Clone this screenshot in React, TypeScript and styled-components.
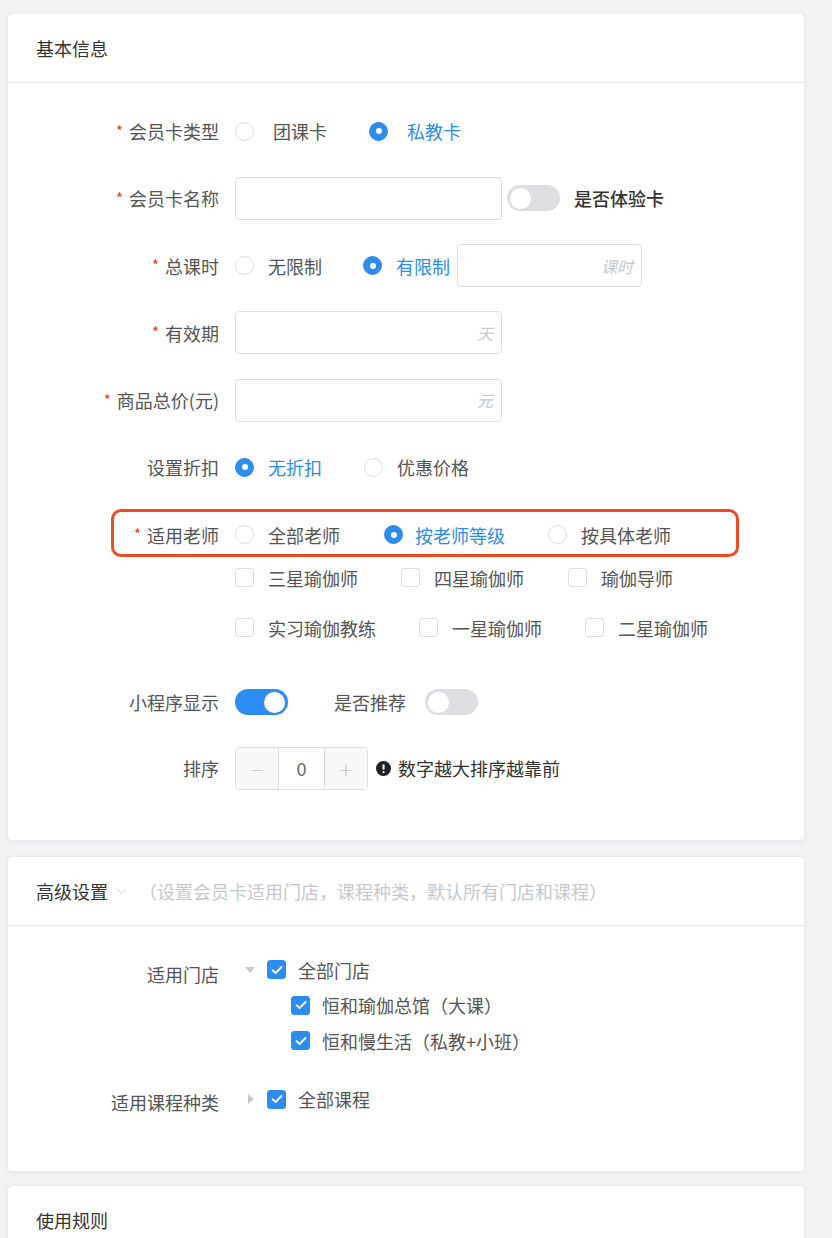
import React from "react";
import styled, { createGlobalStyle, css } from "styled-components";
import { ChevronDown } from "lucide-react";

const BLUE = "#2d8cf0";
const BORDER = "#dcdee2";

const GlobalStyle = createGlobalStyle`
  html, body {
    margin: 0;
    padding: 0;
    background: #f3f3f5;
  }
  body {
    font-family: "Noto Sans CJK SC", "Noto Sans", sans-serif;
    color: #515a6e;
  }
  * { box-sizing: border-box; }
`;

const Page = styled.div`
  padding: 13px 27px 0 7px;
  display: flex;
  flex-direction: column;
  gap: 13px;
`;

const Card = styled.section<{ $mb?: number }>`
  background: #fff;
  border: 1px solid #e8eaec;
  border-radius: 5px;
  box-shadow: 0 1px 6px rgba(0, 0, 0, 0.05);
  margin-bottom: ${(p) => p.$mb ?? 0}px;
`;

const CardHeader = styled.div`
  height: 69px;
  padding-left: 28px;
  display: flex;
  align-items: center;
  gap: 6px;
  border-bottom: 1px solid #e8eaec;
  font-size: 18px;
  color: #333;
`;

const HeaderHint = styled.span`
  color: #c5c8ce;
  margin-left: 4px;
`;

const CardBody = styled.div<{ $top: number; $bottom: number }>`
  padding-top: ${(p) => p.$top}px;
  padding-bottom: ${(p) => p.$bottom}px;
`;

const FormItem = styled.div<{ $mb?: number }>`
  position: relative;
  display: grid;
  grid-template-columns: 211px 1fr;
  column-gap: 16px;
  margin-bottom: ${(p) => (p.$mb ?? 25.3)}px;
  &:last-child { margin-bottom: 0; }
`;

const Label = styled.div<{ $tall?: number }>`
  height: ${(p) => p.$tall ?? 42}px;
  display: flex;
  align-items: center;
  justify-content: flex-end;
  font-size: 18px;
  color: #555;
  white-space: nowrap;
`;

const Star = styled.span`
  color: #ed4014;
  font-size: 15px;
  margin-right: 6px;
  position: relative;
  top: -1px;
`;

const Line = styled.div<{ $h?: number; $mt?: number }>`
  height: ${(p) => p.$h ?? 42}px;
  margin-top: ${(p) => p.$mt ?? 0}px;
  display: flex;
  align-items: center;
  font-size: 18px;
  color: #555;
  white-space: nowrap;
`;

const Option = styled.label<{ $gap?: number; $mr?: number }>`
  display: inline-flex;
  align-items: center;
  gap: ${(p) => p.$gap ?? 14}px;
  margin-right: ${(p) => p.$mr ?? 42}px;
  &:last-child { margin-right: 0; }
`;

const OptionText = styled.span<{ $on?: boolean }>`
  color: ${(p) => (p.$on ? BLUE : "#555")};
`;

const RadioDot = styled.span<{ $on?: boolean }>`
  width: 19px;
  height: 19px;
  border-radius: 50%;
  border: 1px solid ${BORDER};
  background: #fff;
  display: inline-flex;
  align-items: center;
  justify-content: center;
  ${(p) =>
    p.$on &&
    css`
      border-color: ${BLUE};
      background: ${BLUE};
      &::after {
        content: "";
        width: 6px;
        height: 6px;
        border-radius: 50%;
        background: #fff;
      }
    `}
`;

const Box = styled.span<{ $on?: boolean }>`
  width: 19px;
  height: 19px;
  border-radius: 3px;
  border: 1px solid ${BORDER};
  background: ${(p) => (p.$on ? BLUE : "#fff")};
  border-color: ${(p) => (p.$on ? BLUE : BORDER)};
  display: inline-flex;
  align-items: center;
  justify-content: center;
`;

const Input = styled.div<{ $w: number }>`
  width: ${(p) => p.$w}px;
  height: 43px;
  border: 1px solid ${BORDER};
  border-radius: 4px;
  background: #fff;
  display: flex;
  align-items: center;
  justify-content: flex-end;
  padding-right: 8px;
`;

const Suffix = styled.span`
  font-size: 16px;
  font-style: italic;
  color: #c5c8ce;
`;

const Switch = styled.span<{ $on?: boolean }>`
  width: 53px;
  height: 26px;
  border-radius: 13px;
  background: ${(p) => (p.$on ? BLUE : "#dcdee2")};
  display: inline-flex;
  align-items: center;
  padding: 0 3px;
  justify-content: ${(p) => (p.$on ? "flex-end" : "flex-start")};
  &::after {
    content: "";
    width: 21px;
    height: 21px;
    border-radius: 50%;
    background: #fff;
  }
`;

const InlineText = styled.span<{ $ml?: number; $mr?: number; $strong?: boolean }>`
  color: ${(p) => (p.$strong ? "#333" : "#555")};
  font-weight: ${(p) => (p.$strong ? 500 : 400)};
  margin-left: ${(p) => p.$ml ?? 0}px;
  margin-right: ${(p) => p.$mr ?? 0}px;
`;

const Highlight = styled.div`
  position: absolute;
  left: 103px;
  top: -5px;
  width: 628px;
  height: 48px;
  border: 3px solid #ee4a26;
  border-radius: 10px;
  pointer-events: none;
`;

const CheckGroup = styled.div`
  padding-bottom: 6px;
`;

const Stepper = styled.div`
  width: 133px;
  height: 43px;
  border: 1px solid ${BORDER};
  border-radius: 4px;
  display: grid;
  grid-template-columns: 43px 1fr 43px;
  overflow: hidden;
`;

const StepBtn = styled.span<{ $side: "l" | "r" }>`
  background: #f8f8f9;
  color: #c5c8ce;
  display: flex;
  align-items: center;
  justify-content: center;
  font-size: 24px;
  font-weight: 300;
  ${(p) =>
    p.$side === "l"
      ? css`border-right: 1px solid ${BORDER};`
      : css`border-left: 1px solid ${BORDER};`}
`;

const StepValue = styled.span`
  display: flex;
  align-items: center;
  justify-content: center;
  color: #666;
  font-size: 18px;
`;

const Tip = styled.span`
  display: inline-flex;
  align-items: center;
  gap: 7px;
  margin-left: 8px;
  color: #333;
`;

const TreeLine = styled.div<{ $indent?: number }>`
  height: 35.5px;
  display: flex;
  align-items: center;
  padding-left: ${(p) => p.$indent ?? 0}px;
  font-size: 18px;
  color: #555;
  white-space: nowrap;
`;

const Switcher = styled.span`
  width: 26px;
  margin-right: 6px;
  display: inline-flex;
  justify-content: flex-end;
  padding-right: 4px;
`;

const Caret = styled.span<{ $open?: boolean }>`
  width: 0;
  height: 0;
  ${(p) =>
    p.$open
      ? css`
          border-left: 5px solid transparent;
          border-right: 5px solid transparent;
          border-top: 6px solid #c5c8ce;
          margin-right: 2px;
        `
      : css`
          border-top: 5px solid transparent;
          border-bottom: 5px solid transparent;
          border-left: 6px solid #c5c8ce;
          margin-right: 3px;
        `}
`;

const TreeText = styled.span`
  margin-left: 12px;
`;

const Check = () => (
  <svg width="12" height="10" viewBox="0 0 12 10">
    <path d="M1.5 5.2 L4.6 8 L10.5 2" fill="none" stroke="#fff" strokeWidth="1.8" strokeLinecap="round" strokeLinejoin="round" />
  </svg>
);

const Radio = ({ on, text, gap, mr }: { on?: boolean; text: string; gap?: number; mr?: number }) => (
  <Option $gap={gap} $mr={mr}>
    <RadioDot $on={on} />
    <OptionText $on={on}>{text}</OptionText>
  </Option>
);

const CheckItem = ({ on, text, mr }: { on?: boolean; text: string; mr?: number }) => (
  <Option $mr={mr}>
    <Box $on={on}>{on && <Check />}</Box>
    <OptionText>{text}</OptionText>
  </Option>
);

const TreeNode = ({ text, indent, caret }: { text: string; indent?: number; caret?: "open" | "closed" }) => (
  <TreeLine $indent={indent}>
    {caret && (
      <Switcher>
        <Caret $open={caret === "open"} />
      </Switcher>
    )}
    <Box $on>
      <Check />
    </Box>
    <TreeText>{text}</TreeText>
  </TreeLine>
);

const InfoIcon = () => (
  <svg width="15" height="15" viewBox="0 0 16 16">
    <circle cx="8" cy="8" r="8" fill="#222" />
    <rect x="6.9" y="3.4" width="2.2" height="6" rx="1" fill="#fff" />
    <circle cx="8" cy="11.9" r="1.2" fill="#fff" />
  </svg>
);

export default function App() {
  return (
    <>
      <GlobalStyle />
      <Page>
        <Card $mb={2}>
          <CardHeader>基本信息</CardHeader>
          <CardBody $top={27} $bottom={51}>
            <FormItem>
              <Label><Star>*</Star>会员卡类型</Label>
              <Line>
                <Radio text="团课卡" gap={19} mr={42} />
                <Radio on text="私教卡" gap={19} />
              </Line>
            </FormItem>

            <FormItem>
              <Label><Star>*</Star>会员卡名称</Label>
              <Line>
                <Input $w={267} />
                <Switch style={{ marginLeft: 5 }} />
                <InlineText $strong $ml={14}>是否体验卡</InlineText>
              </Line>
            </FormItem>

            <FormItem>
              <Label><Star>*</Star>总课时</Label>
              <Line>
                <Radio text="无限制" mr={41} />
                <Radio on text="有限制" gap={14} mr={7} />
                <Input $w={185}><Suffix>课时</Suffix></Input>
              </Line>
            </FormItem>

            <FormItem>
              <Label><Star>*</Star>有效期</Label>
              <Line>
                <Input $w={267}><Suffix>天</Suffix></Input>
              </Line>
            </FormItem>

            <FormItem>
              <Label><Star>*</Star>商品总价(元)</Label>
              <Line>
                <Input $w={267}><Suffix>元</Suffix></Input>
              </Line>
            </FormItem>

            <FormItem>
              <Label>设置折扣</Label>
              <Line>
                <Radio on text="无折扣" mr={42} />
                <Radio text="优惠价格" />
              </Line>
            </FormItem>

            <FormItem>
              <Highlight />
              <Label><Star>*</Star>适用老师</Label>
              <div>
                <Line>
                  <Radio text="全部老师" mr={44} />
                  <Radio on text="按老师等级" gap={12} mr={43} />
                  <Radio text="按具体老师" />
                </Line>
                <CheckGroup>
                  <Line $h={44}>
                    <CheckItem text="三星瑜伽师" mr={43} />
                    <CheckItem text="四星瑜伽师" mr={44} />
                    <CheckItem text="瑜伽导师" />
                  </Line>
                  <Line $h={44} $mt={6}>
                    <CheckItem text="实习瑜伽教练" mr={43} />
                    <CheckItem text="一星瑜伽师" mr={43} />
                    <CheckItem text="二星瑜伽师" />
                  </Line>
                </CheckGroup>
              </div>
            </FormItem>

            <FormItem $mb={24}>
              <Label>小程序显示</Label>
              <Line>
                <Switch $on />
                <InlineText $ml={46} $mr={19}>是否推荐</InlineText>
                <Switch />
              </Line>
            </FormItem>

            <FormItem>
              <Label>排序</Label>
              <Line>
                <Stepper>
                  <StepBtn $side="l">−</StepBtn>
                  <StepValue>0</StepValue>
                  <StepBtn $side="r">+</StepBtn>
                </Stepper>
                <Tip>
                  <InfoIcon />
                  数字越大排序越靠前
                </Tip>
              </Line>
            </FormItem>
          </CardBody>
        </Card>

        <Card>
          <CardHeader>
            高级设置
            <ChevronDown size={15} color="#c5c8ce" strokeWidth={1.5} />
            <HeaderHint>（设置会员卡适用门店，课程种类，默认所有门店和课程）</HeaderHint>
          </CardHeader>
          <CardBody $top={26} $bottom={48}>
            <FormItem $mb={23}>
              <Label $tall={43}>适用门店</Label>
              <div>
                <TreeNode text="全部门店" caret="open" />
                <TreeNode text="恒和瑜伽总馆（大课）" indent={56} />
                <TreeNode text="恒和慢生活（私教+小班）" indent={56} />
              </div>
            </FormItem>
            <FormItem>
              <Label $tall={41}>适用课程种类</Label>
              <div>
                <TreeNode text="全部课程" caret="closed" />
              </div>
            </FormItem>
          </CardBody>
        </Card>

        <Card>
          <CardHeader>使用规则</CardHeader>
          <CardBody $top={60} $bottom={60} />
        </Card>
      </Page>
    </>
  );
}
